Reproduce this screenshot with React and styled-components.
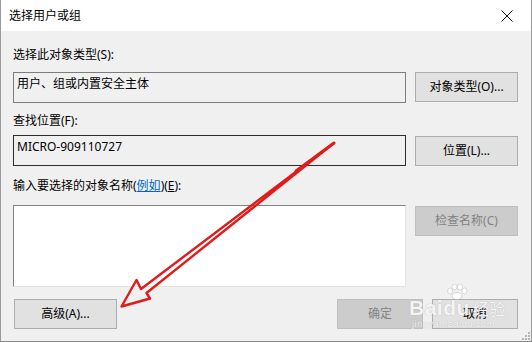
import React from "react";
import styled, { createGlobalStyle } from "styled-components";

const Global = createGlobalStyle`
  html, body { margin: 0; padding: 0; background: #f0f0f0; }
  body { font-family: "Noto Sans", "Noto Sans CJK SC", sans-serif; }
`;

const FONT = `"Noto Sans", "Noto Sans CJK SC", sans-serif`;

const Window = styled.div`
  position: relative;
  width: 532px;
  height: 342px;
  box-sizing: border-box;
  background: #f0f0f0;
  border-left: 1px solid #9a9a9a;
  border-right: 1px solid #9a9a9a;
  border-bottom: 1px solid #8a8a8a;
  display: flex;
  flex-direction: column;
  font-family: ${FONT};
  font-size: 12px;
  color: #000;
  overflow: hidden;
`;

const TitleBar = styled.div`
  height: 31px;
  flex: none;
  background: #ffffff;
  display: flex;
  align-items: center;
  justify-content: space-between;
  padding: 0 18px 0 8px;
`;

const Title = styled.span`
  font-size: 12px;
  line-height: 16px;
  color: #000;
`;

const Body = styled.div`
  flex: 1;
  display: flex;
  flex-direction: column;
  padding: 0 13px 0 12px;
`;

const Label = styled.div`
  font-size: 12px;
  line-height: 16px;
  height: 16px;
  margin-top: ${(p) => p.$mt}px;
  white-space: nowrap;
`;

const Link = styled.span`
  color: #0066cc;
  text-decoration: underline;
`;

const Ul = styled.span`
  text-decoration: underline;
`;

const Row = styled.div`
  display: flex;
  align-items: ${(p) => p.$align || "flex-start"};
  gap: 9px;
  margin-top: ${(p) => p.$mt}px;
`;

const Field = styled.div`
  box-sizing: border-box;
  width: 393px;
  height: 31px;
  flex: none;
  border: 1px solid ${(p) => p.$border};
  background: #f0f0f0;
  padding: 3px 3px;
  font-size: 12px;
  line-height: 16px;
  white-space: nowrap;
`;

const TextArea = styled.div`
  box-sizing: border-box;
  width: 393px;
  height: 82px;
  flex: none;
  background: #ffffff;
  border-top: 1px solid #828282;
  border-left: 1px solid #828282;
  border-right: 1px solid #e3e3e3;
  border-bottom: 1px solid #e3e3e3;
`;

const Button = styled.div`
  box-sizing: border-box;
  width: ${(p) => p.$w || 103}px;
  height: 30px;
  flex: none;
  display: flex;
  align-items: center;
  justify-content: center;
  font-size: 12px;
  line-height: 16px;
  white-space: nowrap;
  background: ${(p) => (p.$disabled ? "#cccccc" : "#e1e1e1")};
  border: 1px solid ${(p) => (p.$disabled ? "#bfbfbf" : "#adadad")};
  color: ${(p) => (p.$disabled ? "#838383" : "#000")};
  margin-top: ${(p) => p.$mt || 0}px;
`;

const Footer = styled.div`
  display: flex;
  justify-content: space-between;
  margin-top: 12px;
  padding-left: 1px;
`;

const ButtonGroup = styled.div`
  display: flex;
  gap: 9px;
`;

const Overlay = styled.svg`
  position: absolute;
  left: -1px;
  top: 0;
  pointer-events: none;
`;

const Grip = styled.svg`
  position: absolute;
  right: 1px;
  bottom: 1px;
`;

const Watermark = styled.div`
  position: absolute;
  left: 408px;
  top: 283px;
  width: 100px;
  height: 50px;
  pointer-events: none;
  font-family: "Liberation Sans", "Noto Sans CJK SC", sans-serif;
  color: rgba(255, 255, 255, 0.9);
  text-shadow: 0 0 1px rgba(120, 120, 120, 0.55);
`;

const WmMain = styled.div`
  position: absolute;
  left: 0;
  top: 14px;
  display: flex;
  align-items: baseline;
  font-size: 21px;
  font-weight: bold;
  line-height: 22px;
  letter-spacing: 0.5px;
`;

const WmCn = styled.span`
  font-family: "Noto Sans CJK SC", sans-serif;
  font-size: 16px;
  font-weight: normal;
  margin-left: 3px;
`;

const WmSub = styled.div`
  position: absolute;
  left: 3px;
  top: 36px;
  font-size: 9px;
  line-height: 10px;
  letter-spacing: 0.6px;
`;

const Paw = styled.svg`
  position: absolute;
  left: 37px;
  top: 1px;
`;

export default function App() {
  return (
    <>
      <Global />
      <Window>
        <TitleBar>
          <Title>选择用户或组</Title>
          <svg width="12" height="12" viewBox="0 0 12 12">
            <path d="M0.5 0.5 L11.5 11.5 M11.5 0.5 L0.5 11.5" stroke="#111" strokeWidth="1" fill="none" />
          </svg>
        </TitleBar>
        <Body>
          <Label $mt={16}>选择此对象类型(S):</Label>
          <Row $mt={9}>
            <Field $border="#7d7d7d">用户、组或内置安全主体</Field>
            <Button>对象类型(O)...</Button>
          </Row>
          <Label $mt={10}>查找位置(F):</Label>
          <Row $mt={6} $align="center">
            <Field $border="#2e2e2e">MICRO-909110727</Field>
            <Button>位置(L)...</Button>
          </Row>
          <Label $mt={12}>
            输入要选择的对象名称(<Link>例如</Link>)(<Ul>E</Ul>):
          </Label>
          <Row $mt={11}>
            <TextArea />
            <Button $disabled $mt={1}>检查名称(C)</Button>
          </Row>
          <Footer>
            <Button>高级(A)...</Button>
            <ButtonGroup>
              <Button $disabled $w={86}>确定</Button>
              <Button $w={86}>取消</Button>
            </ButtonGroup>
          </Footer>
        </Body>

        <Watermark>
          <Paw width="22" height="16" viewBox="0 0 22 16">
            <g fill="rgba(255,255,255,0.9)" stroke="rgba(140,140,140,0.5)" strokeWidth="0.6">
              <ellipse cx="4" cy="7" rx="2.5" ry="3" />
              <ellipse cx="8.5" cy="3" rx="2.5" ry="3" />
              <ellipse cx="14" cy="3" rx="2.5" ry="3" />
              <ellipse cx="18.5" cy="7" rx="2.5" ry="3" />
              <ellipse cx="11" cy="12" rx="5" ry="3.5" />
            </g>
          </Paw>
          <WmMain>
            Bai<span>du</span>
            <WmCn>经验</WmCn>
          </WmMain>
          <WmSub>jingyan.baidu.com</WmSub>
        </Watermark>

        <Grip width="10" height="10" viewBox="0 0 10 10">
          <g fill="#b5b5b5">
            <rect x="8" y="2" width="2" height="2" />
            <rect x="5" y="5" width="2" height="2" />
            <rect x="8" y="5" width="2" height="2" />
            <rect x="2" y="8" width="2" height="2" />
            <rect x="5" y="8" width="2" height="2" />
            <rect x="8" y="8" width="2" height="2" />
          </g>
        </Grip>

        <Overlay width="532" height="342" viewBox="0 0 532 342">
          <path
            d="M334 143 L141 289 L136.5 280 L121.5 306.5 L150 298.5 L146.5 293 Z"
            fill="none"
            stroke="#e01b1b"
            strokeWidth="2.4"
            strokeLinejoin="round"
          />
          <path d="M334 143 L296 171" stroke="#e01b1b" strokeWidth="3" strokeLinecap="round" />
        </Overlay>
      </Window>
    </>
  );
}
